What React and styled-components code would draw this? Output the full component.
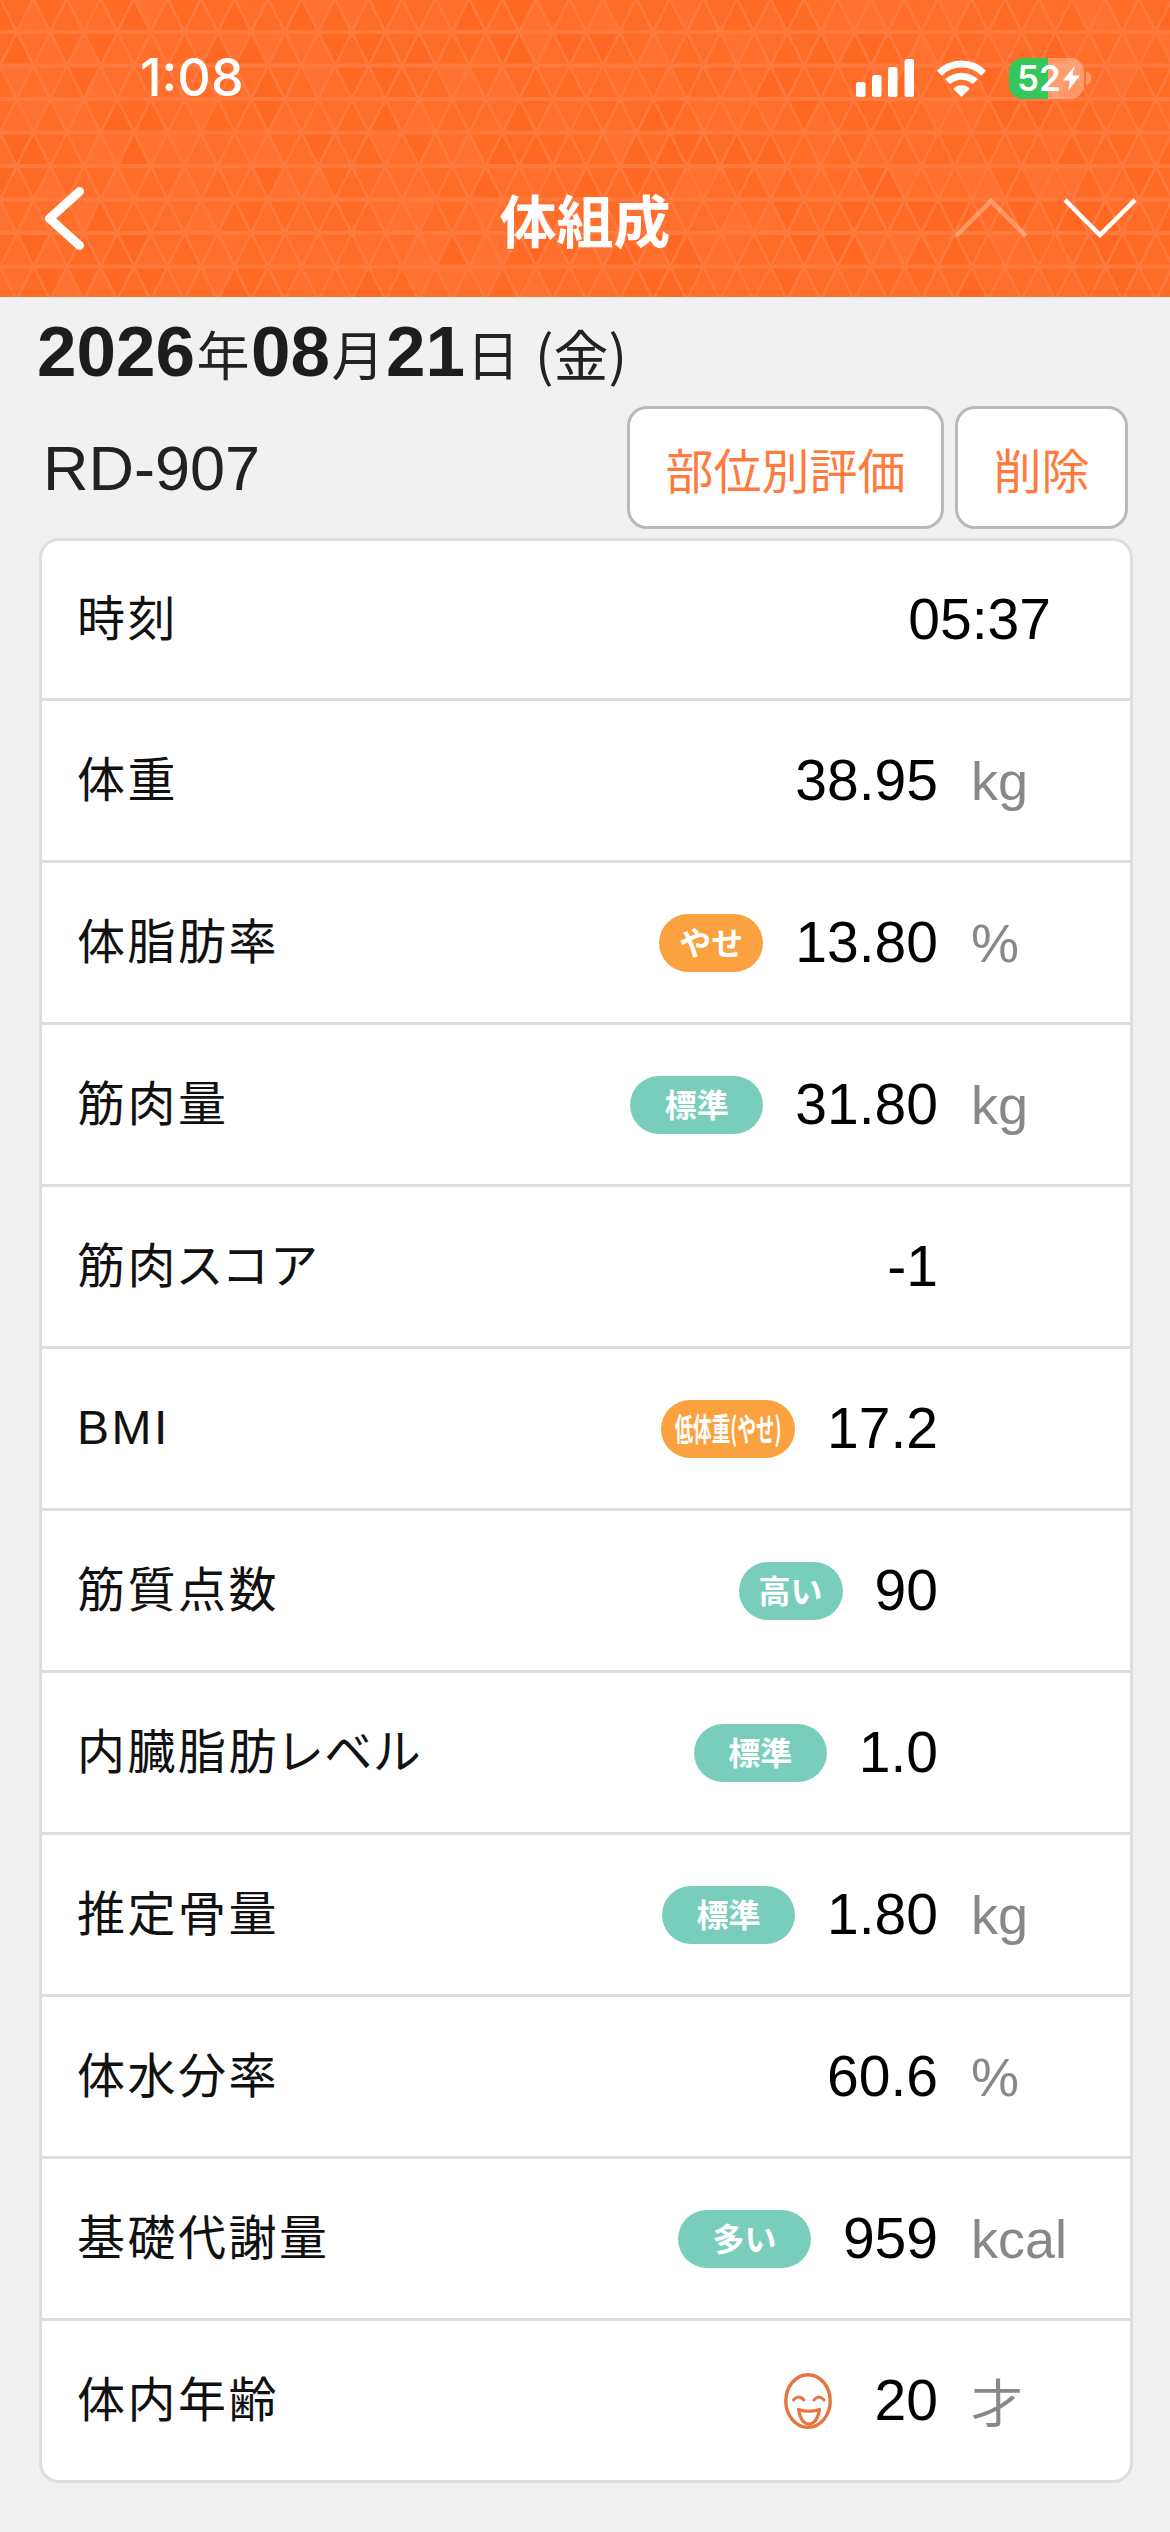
import React from 'react';
import styled, { createGlobalStyle } from 'styled-components';

const SANS = `"Liberation Sans", "Noto Sans CJK JP", sans-serif`;
const CJK = `"Noto Sans CJK JP", "Liberation Sans", sans-serif`;

const rows = [
  { label: '時刻', value: '05:37', short: true },
  { label: '体重', value: '38.95', unit: 'kg' },
  { label: '体脂肪率', value: '13.80', unit: '%', badge: { text: 'やせ', tone: 'orange', width: 104 } },
  { label: '筋肉量', value: '31.80', unit: 'kg', badge: { text: '標準', tone: 'teal', width: 133 } },
  { label: '筋肉スコア', value: '-1' },
  { label: 'BMI', value: '17.2', latin: true, badge: { text: '低体重(やせ)', tone: 'orange', width: 134, squeeze: 0.58 } },
  { label: '筋質点数', value: '90', badge: { text: '高い', tone: 'teal', width: 104 } },
  { label: '内臓脂肪レベル', value: '1.0', badge: { text: '標準', tone: 'teal', width: 133 } },
  { label: '推定骨量', value: '1.80', unit: 'kg', badge: { text: '標準', tone: 'teal', width: 133 } },
  { label: '体水分率', value: '60.6', unit: '%' },
  { label: '基礎代謝量', value: '959', unit: 'kcal', badge: { text: '多い', tone: 'teal', width: 133 } },
  { label: '体内年齢', value: '20', unit: '才', face: true },
];

// triangles of the header, shades come from a small seeded generator so they stay the same
const buildTriangles = () => {
  const w = 33.5;
  const h = 33.5;
  const list = [];
  let seed = 17;
  const next = () => {
    seed = (seed * 9301 + 49297) % 233280;
    return seed / 233280;
  };
  const shades = ['#fe6822', '#ff6a25', '#ff6c28', '#ff6c28', '#ff6e2b', '#ff6e2b', '#ff702e', '#ff7232'];
  for (let r = 0; r < 10; r++) {
    const y0 = -1.5 + r * h;
    const y1 = y0 + h;
    const off = r % 2 === 0 ? 0 : 17;
    for (let k = -1; k < 37; k++) {
      const x = off + k * w;
      list.push({ points: `${x},${y0} ${x - w / 2},${y1} ${x + w / 2},${y1}`, fill: shades[Math.floor(next() * shades.length)] });
      list.push({ points: `${x},${y0} ${x + w},${y0} ${x + w / 2},${y1}`, fill: shades[Math.floor(next() * shades.length)] });
    }
  }
  return list;
};

const triangles = buildTriangles();

const HeaderPattern = () => (
  <PatternSvg viewBox="0 0 1170 297" width="1170" height="297">
    {triangles.map((t, i) => (
      <polygon key={i} points={t.points} fill={t.fill} stroke="#ff7a3e" strokeWidth="2.6" />
    ))}
    {Array.from({ length: 9 }).map((_, i) => (
      <line key={i} x1="0" x2="1170" y1={32 + i * 33.5} y2={32 + i * 33.5} stroke="#ff7a3e" strokeWidth="4" />
    ))}
  </PatternSvg>
);

const Signal = () => (
  <svg width="58" height="38" viewBox="0 0 58 38">
    <rect x="0" y="23" width="9.5" height="15" rx="2.5" fill="#fff" />
    <rect x="16" y="16" width="9.5" height="22" rx="2.5" fill="#fff" />
    <rect x="32" y="8" width="9.5" height="30" rx="2.5" fill="#fff" />
    <rect x="48.5" y="0" width="9.5" height="38" rx="2.5" fill="#fff" />
  </svg>
);

const Wifi = () => (
  <svg width="51" height="38" viewBox="0 0 51 38" fill="none">
    <path d="M3.3 14.3 A31.4 31.4 0 0 1 47.7 14.3" stroke="#fff" strokeWidth="7" />
    <path d="M11.8 22.8 A19.4 19.4 0 0 1 39.2 22.8" stroke="#fff" strokeWidth="7" />
    <path d="M17.2 29.8 A11.7 11.7 0 0 1 33.8 29.8 L25.5 38 Z" fill="#fff" />
  </svg>
);

const Bolt = () => (
  <svg width="17" height="25" viewBox="0 0 17 25">
    <path d="M11.5 0 L0 14.5 H7 L5 25 L17 9.5 H9.5 Z" fill="#fff" />
  </svg>
);

const BackIcon = () => (
  <svg width="39" height="63" viewBox="0 0 39 63" fill="none">
    <path d="M34.5 4.5 L4.5 31.5 L34.5 58.5" stroke="#fff" strokeWidth="9" strokeLinecap="round" strokeLinejoin="round" />
  </svg>
);

const UpIcon = () => (
  <svg width="74" height="40" viewBox="0 0 74 40" fill="none">
    <path d="M2 38 L37 3 L72 38" stroke="#fff" strokeOpacity="0.3" strokeWidth="4.5" />
  </svg>
);

const DownIcon = () => (
  <svg width="74" height="40" viewBox="0 0 74 40" fill="none">
    <path d="M2 2 L37 37 L72 2" stroke="#fff" strokeWidth="4.5" />
  </svg>
);

const FaceIcon = () => (
  <FaceSvg width="48" height="56" viewBox="0 0 48 56" fill="none">
    <ellipse cx="24" cy="28" rx="22.2" ry="26.2" stroke="#e4753f" strokeWidth="3.4" />
    <path d="M9.5 27 Q14.5 21 20 27 M30 27 Q35 21 40 27" stroke="#e4753f" strokeWidth="3" strokeLinecap="round" />
    <path d="M14.5 36.5 Q25 40 35.5 36.5 Q33 51 25 51 Q17 51 14.5 36.5 Z" stroke="#e4753f" strokeWidth="3.2" strokeLinejoin="round" />
  </FaceSvg>
);

const App = () => {
  return (
    <>
      <GlobalStyle />
      <Header>
        <HeaderPattern />
        <StatusBar>
          <Time>1:08</Time>
          <StatusIcons>
            <Signal />
            <Wifi />
            <Battery>
              <BatteryLevel>52</BatteryLevel>
              <Bolt />
            </Battery>
          </StatusIcons>
        </StatusBar>
        <Nav>
          <BackIcon />
          <Title>体組成</Title>
          <NavArrows>
            <UpIcon />
            <DownIcon />
          </NavArrows>
        </Nav>
      </Header>
      <DateLine>
        <Digits>2026</Digits>
        <Kanji>年</Kanji>
        <Digits>08</Digits>
        <Kanji>月</Kanji>
        <Digits>21</Digits>
        <Kanji>日</Kanji>
        <Weekday>(金)</Weekday>
      </DateLine>
      <DeviceRow>
        <DeviceName>RD-907</DeviceName>
        <ActionButton $width={317}>部位別評価</ActionButton>
        <ActionButton $width={173}>削除</ActionButton>
      </DeviceRow>
      <Card>
        {rows.map(({ label, value, unit, badge, face, short, latin }) => (
          <Row key={label}>
            <Label $latin={latin}>{label}</Label>
            {badge && (
              <Badge $tone={badge.tone} $width={badge.width}>
                <BadgeText $squeeze={badge.squeeze}>{badge.text}</BadgeText>
              </Badge>
            )}
            {face && <FaceIcon />}
            <Value>{value}</Value>
            <Unit $short={short} $kanji={unit === '才'}>{unit}</Unit>
          </Row>
        ))}
      </Card>
    </>
  );
};

export default App;

const GlobalStyle = createGlobalStyle`
  body {
    margin: 0;
    background: #f1f1f1;
    font-family: ${SANS};
  }
`;

const Header = styled.header`
  position: relative;
  height: 297px;
  overflow: hidden;
  background: #ff6a26;
  color: #fff;
`;

const PatternSvg = styled.svg`
  position: absolute;
  top: 0;
  left: 0;
`;

const StatusBar = styled.div`
  position: relative;
  display: flex;
  align-items: center;
  justify-content: space-between;
  height: 156px;
  padding: 0 86px 0 140px;
`;

const Time = styled.span`
  font-family: Inter, sans-serif;
  font-size: 52px;
  font-weight: 500;
  line-height: 1;
`;

const StatusIcons = styled.div`
  display: flex;
  align-items: center;
  gap: 22px;
`;

const Battery = styled.div`
  position: relative;
  display: flex;
  align-items: center;
  gap: 2px;
  box-sizing: border-box;
  width: 75px;
  height: 41px;
  padding-left: 8px;
  border-radius: 14px;
  background: linear-gradient(to right, #34c759 52%, rgba(255, 255, 255, 0.3) 52%);

  &::after {
    content: '';
    position: absolute;
    right: -7px;
    top: 14px;
    width: 5px;
    height: 13px;
    border-radius: 0 6px 6px 0;
    background: rgba(255, 255, 255, 0.3);
  }
`;

const BatteryLevel = styled.span`
  font-family: Inter, sans-serif;
  font-size: 35px;
  font-weight: 600;
  line-height: 1;
`;

const Nav = styled.nav`
  position: relative;
  display: grid;
  grid-template-columns: 1fr auto 1fr;
  align-items: center;
  height: 124px;
  padding: 0 33px 0 45px;
`;

const Title = styled.h1`
  margin: 0 12px 0 0;
  font-family: ${CJK};
  font-size: 57px;
  font-weight: 700;
  line-height: 1;
`;

const NavArrows = styled.div`
  display: flex;
  justify-content: flex-end;
  gap: 35px;
`;

const DateLine = styled.div`
  display: flex;
  align-items: baseline;
  height: 109px;
  padding: 19px 0 0 37px;
  box-sizing: border-box;
  color: #222;
`;

const Digits = styled.span`
  font-size: 71px;
  font-weight: 700;
  line-height: 72px;
  color: #1d1d1f;
`;

const Kanji = styled.span`
  margin: 0 1.5px;
  font-family: ${CJK};
  font-size: 53px;
  line-height: 72px;
`;

const Weekday = styled.span`
  margin-left: 14px;
  font-family: ${CJK};
  font-size: 55px;
  line-height: 72px;
`;

const DeviceRow = styled.div`
  display: flex;
  align-items: center;
  gap: 11px;
  height: 123px;
  padding: 0 42px 0 43px;
`;

const DeviceName = styled.span`
  flex: 1;
  font-size: 63px;
  color: #222;
`;

const ActionButton = styled.button`
  box-sizing: border-box;
  width: ${(p) => p.$width}px;
  height: 123px;
  padding: 0;
  border: 3px solid #b9b9b9;
  border-radius: 20px;
  background: #fff;
  color: #ff7a3d;
  font-family: ${CJK};
  font-size: 48px;
`;

const Card = styled.section`
  box-sizing: border-box;
  margin: 9px 37px 0 39px;
  border: 3px solid #dedede;
  border-radius: 20px;
  background: #fff;
  overflow: hidden;
`;

const Row = styled.div`
  display: flex;
  align-items: center;
  gap: 32px;
  box-sizing: border-box;
  height: 162px;
  padding-left: 35px;
  border-bottom: 3px solid #dedede;

  &:first-child {
    height: 160px;
  }

  &:last-child {
    height: 159px;
    border-bottom: 0;
  }
`;

const Label = styled.span`
  flex: 1;
  padding-bottom: ${(p) => (p.$latin ? 2 : 9)}px;
  font-family: ${SANS};
  font-size: 48px;
  letter-spacing: 2.5px;
  font-feature-settings: 'palt';
  color: #111;
`;

const Badge = styled.span`
  display: flex;
  align-items: center;
  justify-content: center;
  width: ${(p) => p.$width}px;
  height: 58px;
  border-radius: 29px;
  background: ${(p) => (p.$tone === 'orange' ? '#fba13f' : '#79cebb')};
  color: #fff;
`;

const BadgeText = styled.span`
  padding-bottom: 4px;
  font-family: ${CJK};
  font-size: 32px;
  font-weight: 700;
  line-height: 1;
  white-space: nowrap;
  transform: scaleX(${(p) => p.$squeeze || 1});
`;

const FaceSvg = styled.svg`
  margin-right: 11px;
`;

const Value = styled.span`
  font-size: 57px;
  line-height: 1;
  color: #000;
`;

const Unit = styled.span`
  box-sizing: border-box;
  width: ${(p) => (p.$short ? 46 : 159)}px;
  margin-left: 1px;
  font-family: ${(p) => (p.$kanji ? CJK : SANS)};
  font-size: ${(p) => (p.$kanji ? 52 : 54)}px;
  line-height: 1;
  color: #888;
`;
